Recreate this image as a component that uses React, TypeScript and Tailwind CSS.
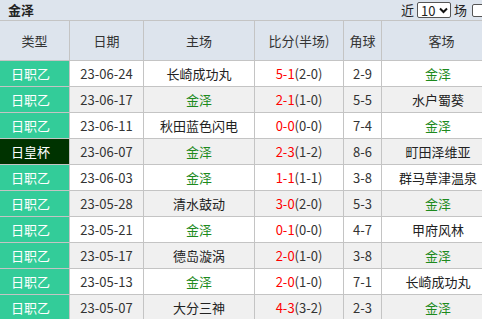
import React from "react";

interface Match {
  type: string;
  date: string;
  home: string;
  score: string;
  half: string;
  corner: string;
  away: string;
}

const TEAM = "金泽";

const matches: Match[] = [
  { type: "日职乙", date: "23-06-24", home: "长崎成功丸", score: "5-1", half: "(2-0)", corner: "2-9", away: "金泽" },
  { type: "日职乙", date: "23-06-17", home: "金泽", score: "2-1", half: "(1-0)", corner: "5-5", away: "水户蜀葵" },
  { type: "日职乙", date: "23-06-11", home: "秋田蓝色闪电", score: "0-0", half: "(0-0)", corner: "7-4", away: "金泽" },
  { type: "日皇杯", date: "23-06-07", home: "金泽", score: "2-3", half: "(1-2)", corner: "8-6", away: "町田泽维亚" },
  { type: "日职乙", date: "23-06-03", home: "金泽", score: "1-1", half: "(1-1)", corner: "3-8", away: "群马草津温泉" },
  { type: "日职乙", date: "23-05-28", home: "清水鼓动", score: "3-0", half: "(2-0)", corner: "5-3", away: "金泽" },
  { type: "日职乙", date: "23-05-21", home: "金泽", score: "0-1", half: "(0-0)", corner: "4-7", away: "甲府风林" },
  { type: "日职乙", date: "23-05-17", home: "德岛漩涡", score: "2-0", half: "(1-0)", corner: "3-8", away: "金泽" },
  { type: "日职乙", date: "23-05-13", home: "金泽", score: "2-0", half: "(1-0)", corner: "7-1", away: "长崎成功丸" },
  { type: "日职乙", date: "23-05-07", home: "大分三神", score: "4-3", half: "(3-2)", corner: "2-3", away: "金泽" },
];

const cols = "grid grid-cols-[70px_74px_111px_89px_38px_120px]";
const cell = "flex items-center justify-center border-r border-b border-[#c4c4c4]";

function Team({ name }: { name: string }) {
  return <span className={name === TEAM ? "text-[#1d8a1d]" : "text-[#222]"}>{name}</span>;
}

export default function App() {
  return (
    <div
      className="w-[502px] bg-white text-[12px] text-[#333]"
      style={{ fontFamily: '"Noto Sans CJK SC", "Noto Sans", sans-serif' }}
    >
      <div className="flex h-[21px] items-center justify-between border-b border-[#c4c4c4] bg-[#dde4ed] pl-[8px] pr-[17px]">
        <span className="text-[13px] font-bold text-[#222]">金泽</span>
        <div className="flex items-center text-[13px] text-[#222]">
          <span>近</span>
          <div className="ml-[3px] flex h-[16px] w-[34px] items-center justify-between rounded-[2px] border border-[#555] bg-white pl-[3px] pr-[2px] text-[13px] leading-none">
            <span>10</span>
            <svg width="9" height="7" viewBox="0 0 9 7">
              <path d="M1 1.5 L4.5 5 L8 1.5" stroke="#111" strokeWidth="2" fill="none" />
            </svg>
          </div>
          <span className="ml-[3px]">场</span>
          <span className="ml-[5px] h-[13px] w-[13px] rounded-[2px] border border-[#555] bg-white" />
        </div>
      </div>

      <div className={`${cols} h-[40px] bg-[#dde4ed] text-[13px] text-[#333]`}>
        <div className={cell}>类型</div>
        <div className={cell}>日期</div>
        <div className={cell}>主场</div>
        <div className={cell}>比分(半场)</div>
        <div className={cell}>角球</div>
        <div className={cell}>客场</div>
      </div>

      {matches.map((m, i) => (
        <div
          key={m.date}
          className={`${cols} h-[26px] text-[13px] ${i % 2 === 1 ? "bg-[#f0f0f0]" : "bg-white"}`}
        >
          <div
            className={`${cell} justify-start pl-[11px] text-white ${
              m.type === "日皇杯" ? "bg-[#003300]" : "bg-[#33cc99]"
            }`}
          >
            {m.type}
          </div>
          <div className={cell}>{m.date}</div>
          <div className={cell}>
            <Team name={m.home} />
          </div>
          <div className={cell}>
            <span className="text-[#ff0000]">{m.score}</span>
            <span>{m.half}</span>
          </div>
          <div className={cell}>{m.corner}</div>
          <div className={`${cell} justify-start pl-[16px]`}>
            <span className="w-[80px] text-center">
              <Team name={m.away} />
            </span>
          </div>
        </div>
      ))}
    </div>
  );
}
